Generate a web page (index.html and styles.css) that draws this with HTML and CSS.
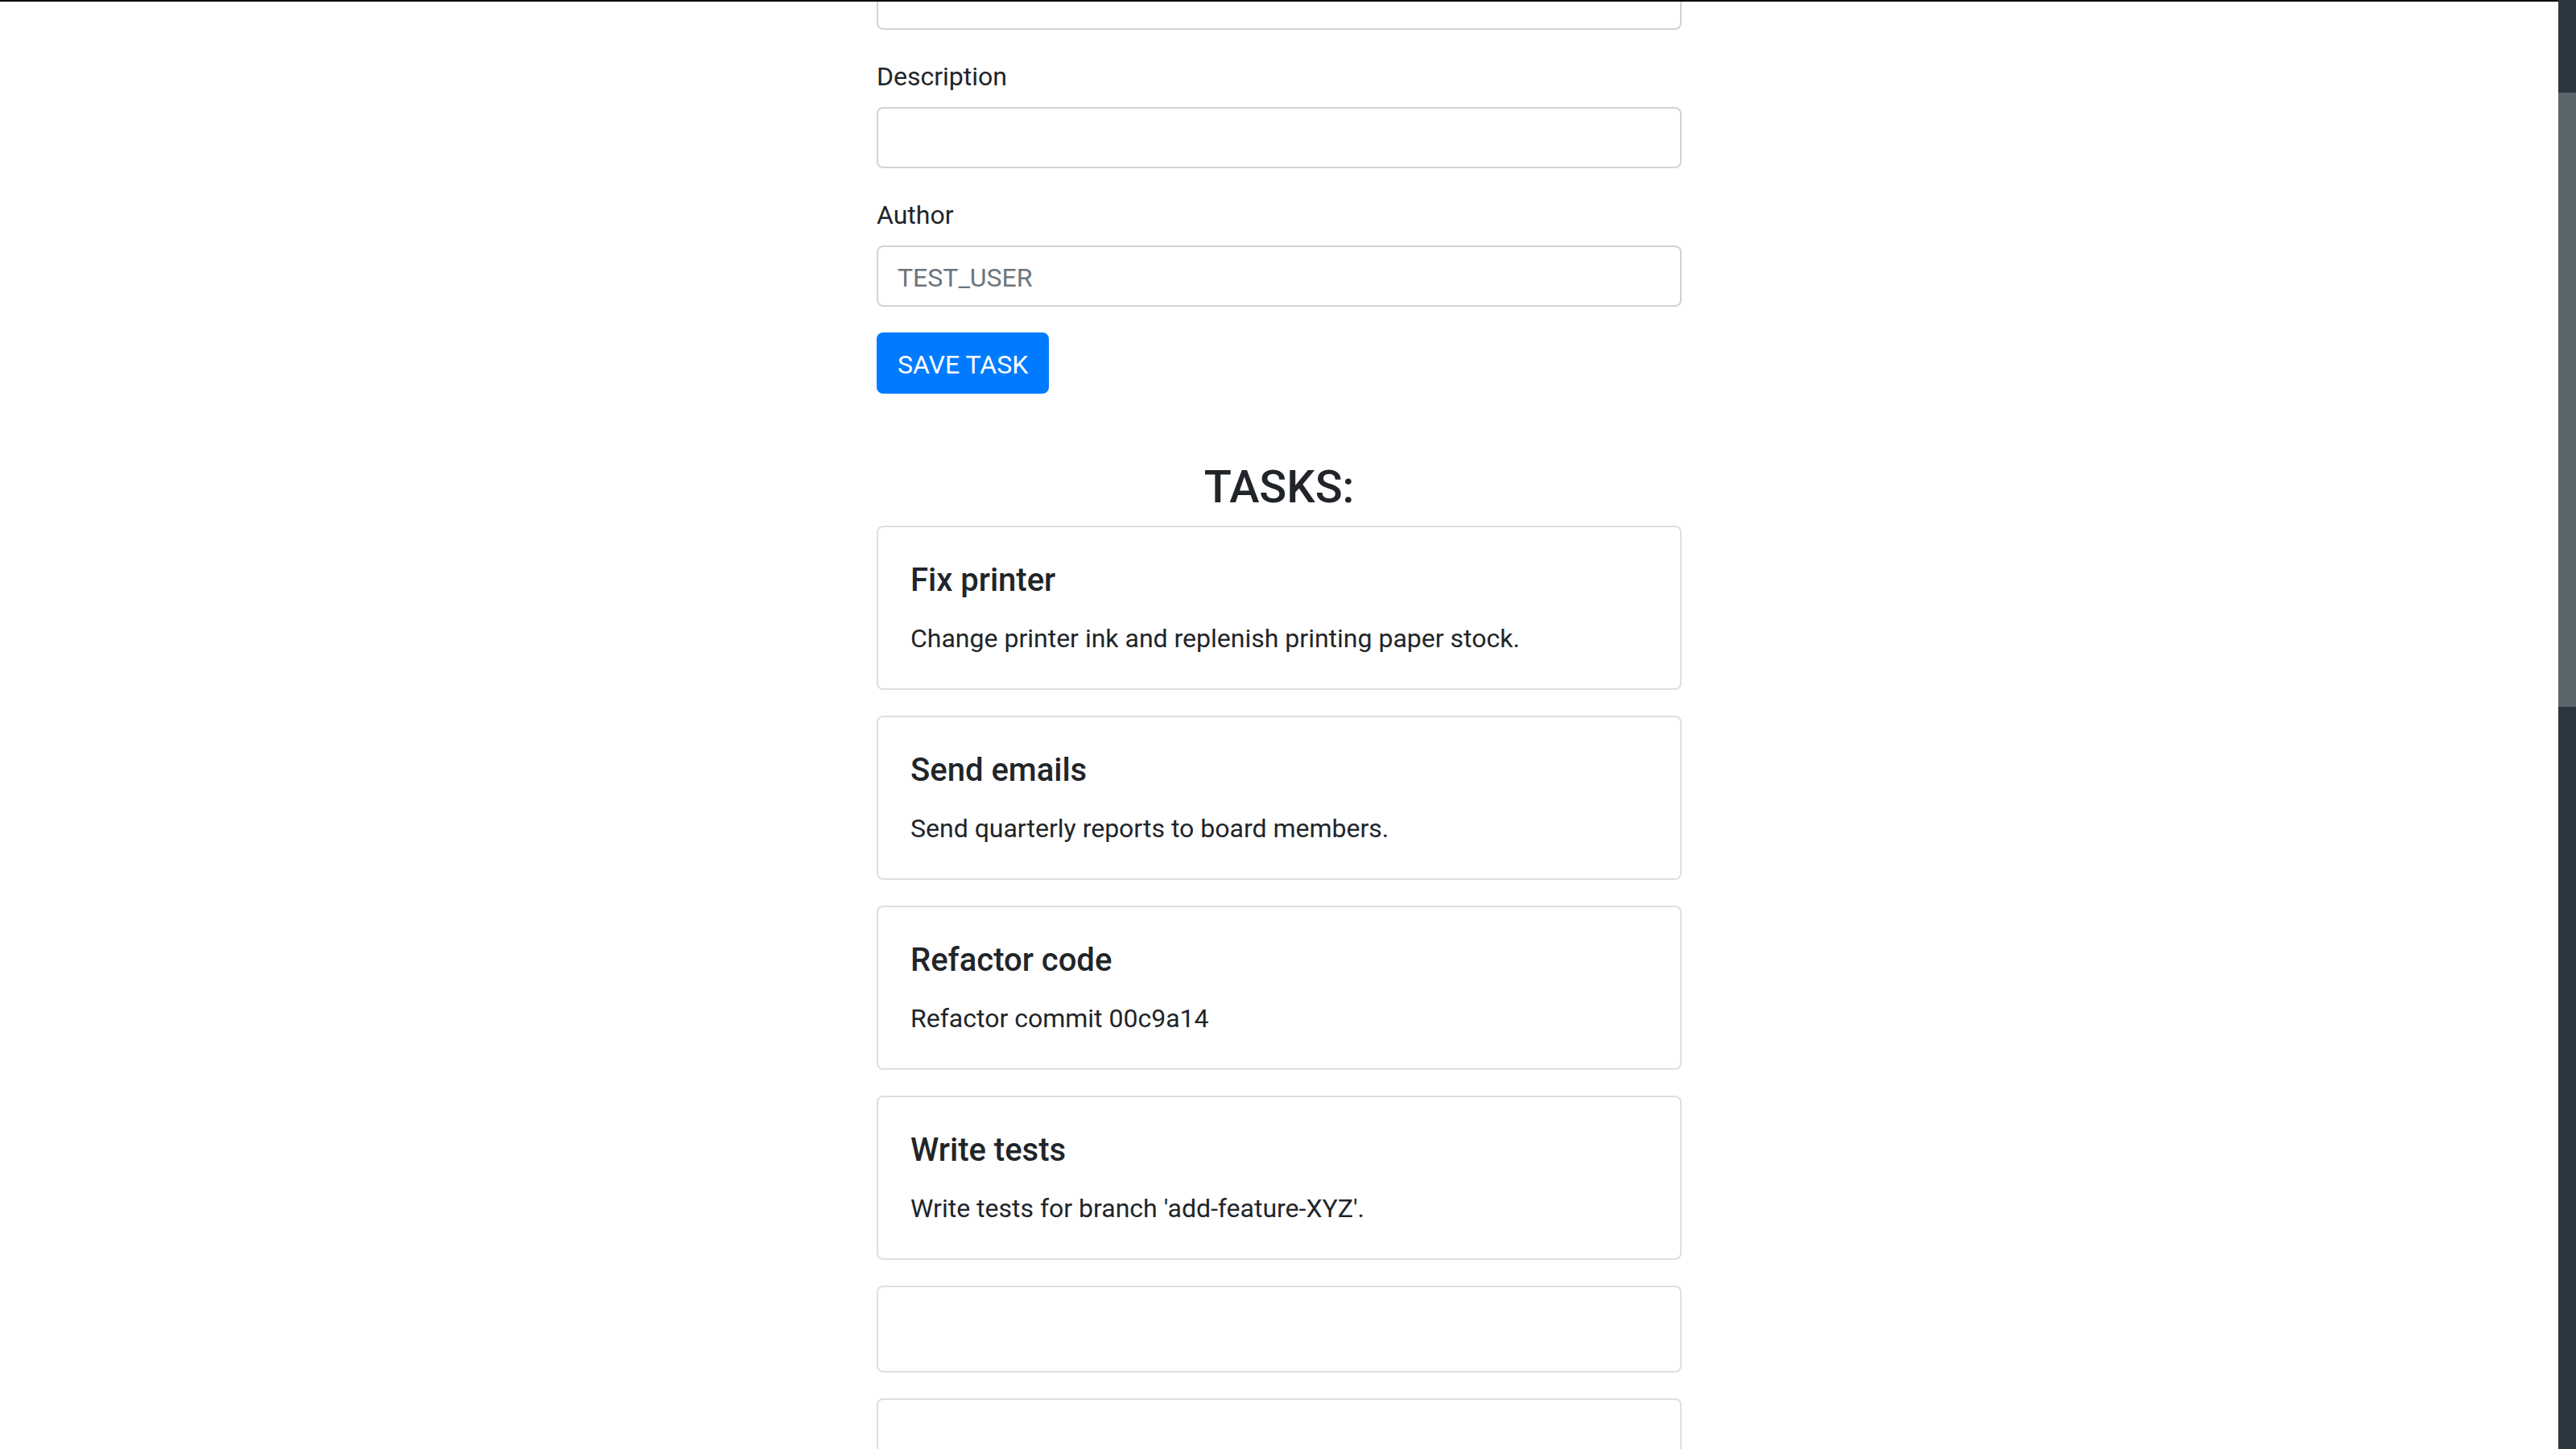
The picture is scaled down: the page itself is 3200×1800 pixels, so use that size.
FILE: index.html
```html
<!DOCTYPE html>
<html lang="en">
<head>
<meta charset="utf-8">
<title>Tasks</title>
<link rel="stylesheet" href="styles.css">
</head>
<body>
<div class="screen">
  <div class="viewport">
    <div class="edge"></div>
    <main class="page">
      <form class="task-form">
        <div class="form-group">
          <input class="form-control" id="title" type="text" aria-label="Title">
        </div>
        <div class="form-group">
          <label class="form-label" for="description">Description</label>
          <input class="form-control" id="description" type="text">
        </div>
        <div class="form-group">
          <label class="form-label" for="author">Author</label>
          <input class="form-control" id="author" type="text" placeholder="TEST_USER">
        </div>
        <button class="btn-primary" type="button">SAVE TASK</button>
      </form>

      <h3 class="tasks-heading">TASKS:</h3>

      <div class="task-list">
        <div class="card">
          <div class="card-body">
            <h5 class="card-title">Fix printer</h5>
            <p class="card-text">Change printer ink and replenish printing paper stock.</p>
          </div>
        </div>
        <div class="card">
          <div class="card-body">
            <h5 class="card-title">Send emails</h5>
            <p class="card-text">Send quarterly reports to board members.</p>
          </div>
        </div>
        <div class="card">
          <div class="card-body">
            <h5 class="card-title">Refactor code</h5>
            <p class="card-text">Refactor commit 00c9a14</p>
          </div>
        </div>
        <div class="card">
          <div class="card-body">
            <h5 class="card-title">Write tests</h5>
            <p class="card-text">Write tests for branch 'add-feature-XYZ'.</p>
          </div>
        </div>
        <div class="card">
          <div class="card-body">
            <h5 class="card-title"></h5>
            <p class="card-text"></p>
          </div>
        </div>
        <div class="card">
          <div class="card-body">
            <h5 class="card-title"></h5>
            <p class="card-text"></p>
          </div>
        </div>
      </div>
    </main>
  </div>
  <div class="scrollbar">
    <div class="scroll-thumb"></div>
  </div>
</div>
</body>
</html>
```

FILE: styles.css
```css
* {
  box-sizing: border-box;
}

html, body {
  margin: 0;
  padding: 0;
  height: 100%;
}

body {
  font-family: Roboto, "Liberation Sans", Arial, sans-serif;
  font-size: 32px;
  line-height: 1.5;
  color: #212529;
  background: #ffffff;
}

.screen {
  display: flex;
  width: 3200px;
  height: 1800px;
  overflow: hidden;
}

.viewport {
  flex: 1;
  display: flex;
  flex-direction: column;
  overflow: hidden;
  background: #ffffff;
}

.edge {
  flex: 0 0 2px;
  height: 2px;
  background: #000000;
  position: relative;
  z-index: 1;
}

.page {
  width: 1000px;
  margin: -41px auto 0;
  flex: 0 0 auto;
}

.form-group {
  margin-bottom: 32px;
}

.form-label {
  display: block;
  margin-bottom: 16px;
  padding-top: 2px;
  height: 48px;
  font-size: 32px;
  line-height: 48px;
  font-weight: 400;
}

.form-control {
  display: block;
  width: 100%;
  height: 76px;
  padding: 14px 24px 10px;
  font-family: inherit;
  font-size: 32px;
  line-height: 48px;
  color: #495057;
  background: #ffffff;
  border: 2px solid #ced4da;
  border-radius: 8px;
  outline: none;
}

.form-control::placeholder {
  color: #6c757d;
  opacity: 1;
}

.btn-primary {
  display: inline-block;
  height: 76px;
  padding: 14px 24px 10px;
  font-family: inherit;
  font-size: 32px;
  line-height: 48px;
  font-weight: 400;
  color: #ffffff;
  background: #007bff;
  border: 2px solid #007bff;
  border-radius: 8px;
  cursor: pointer;
  vertical-align: top;
}

.task-form {
  margin: 0;
}

.tasks-heading {
  margin: 83px 0 14px;
  font-size: 56px;
  line-height: 1.2;
  font-weight: 500;
  text-align: center;
}

.task-list {
  display: flex;
  flex-direction: column;
  gap: 32px;
}

.card {
  background: #ffffff;
  border: 2px solid rgba(0, 0, 0, 0.125);
  border-radius: 8px;
}

.card-body {
  padding: 42px 40px 38px;
}

.card-title {
  margin: 0 0 24px;
  font-size: 40px;
  line-height: 1.2;
  font-weight: 500;
}

.card-text {
  margin: 0;
  font-size: 32px;
  line-height: 48px;
}

.scrollbar {
  flex: 0 0 22px;
  width: 22px;
  height: 1800px;
  background: #2b373e;
  padding-top: 115px;
}

.scroll-thumb {
  height: 763px;
  background: #5b666c;
}
```
